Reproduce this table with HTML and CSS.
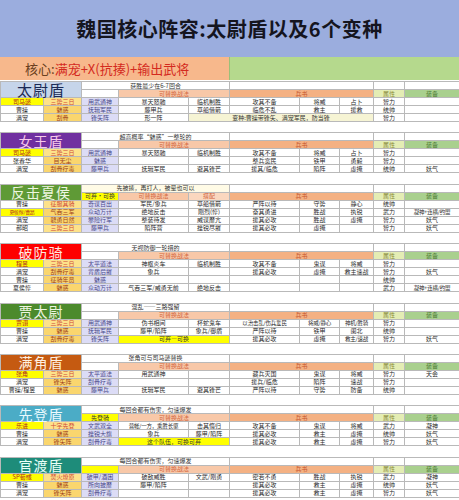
FILE: index.html
```html
<!DOCTYPE html>
<html lang="zh">
<head>
<meta charset="utf-8">
<title>魏国核心阵容</title>
<link rel="stylesheet" href="styles.css">
</head>
<body>
<div class="title">魏国核心阵容:太尉盾以及6个变种</div>
<div class="core"><div class="core-l"><span class="k">核心:</span><span class="r">满宠+X(抗揍)+输出武将</span></div><div class="core-r"></div></div>

<table class="sec">
<colgroup><col class="c1"><col class="c2"><col class="c3"><col class="c4"><col class="c5"><col class="c6"><col class="c7"><col class="c8"><col class="c9"><col class="c10"></colgroup>
<tr class="ra"><td class="name n1" rowspan="2" colspan="2">太尉盾</td><td colspan="3" class="sub">获胜最少在6-7回合</td><td colspan="3"></td><td></td><td></td></tr>
<tr class="rb"><td></td><td colspan="2" class="h-sk">可替换战法</td><td colspan="3" class="h-bs">兵书</td><td class="h-sx">属性</td><td class="h-zb">装备</td></tr>
<tr><td class="gy">司马懿</td><td class="sk1">三势三日</td><td class="lv">用武通神</td><td>暴天怒驰</td><td>临机制胜</td><td>攻其不备</td><td>将威</td><td>占卜</td><td>智力</td><td></td></tr>
<tr><td>曹操</td><td class="sk">魅惑</td><td class="lv">抚辑军民</td><td>藤甲兵</td><td>草船借箭</td><td>临危不乱</td><td>救主</td><td>援救</td><td>统帅</td><td></td></tr>
<tr><td>满宠</td><td class="sk">刮骨</td><td class="lv">锋矢阵</td><td>形一阵</td><td colspan="4" class="vt">变种:曹操带锋矢、满宠军民，防当锋</td><td>智力</td><td></td></tr>
</table>

<table class="sec">
<colgroup><col class="c1"><col class="c2"><col class="c3"><col class="c4"><col class="c5"><col class="c6"><col class="c7"><col class="c8"><col class="c9"><col class="c10"></colgroup>
<tr class="ra"><td class="name n2" rowspan="2" colspan="2">女王盾</td><td colspan="3" class="sub">超高概率“魅惑”一整轮的</td><td colspan="3"></td><td></td><td></td></tr>
<tr class="rb"><td></td><td colspan="2" class="h-sk">可替换战法</td><td colspan="3" class="h-bs">兵书</td><td class="h-sx">属性</td><td class="h-zb">装备</td></tr>
<tr><td class="gy">司马懿</td><td class="sk1">三势三日</td><td class="lv">用武通神</td><td>暴天怒驰</td><td>临机制胜</td><td>攻其不备</td><td>将威</td><td>占卜</td><td>智力</td><td></td></tr>
<tr><td>张春华</td><td class="sk">目无尘</td><td class="lv">魅惑</td><td></td><td></td><td>整兵宽民</td><td>铁甲</td><td>勇毅</td><td>智力</td><td></td></tr>
<tr><td>满宠</td><td class="sk">刮骨疗毒</td><td class="lv">藤甲兵</td><td>抚辑军民</td><td>避其锋芒</td><td>援其/临危</td><td>陷阵</td><td>虚掩</td><td>统帅</td><td>妖气</td></tr>
</table>

<table class="sec">
<colgroup><col class="c1"><col class="c2"><col class="c3"><col class="c4"><col class="c5"><col class="c6"><col class="c7"><col class="c8"><col class="c9"><col class="c10"></colgroup>
<tr class="ra"><td class="name n3" rowspan="2" colspan="2">反击夏侯</td><td colspan="3" class="sub cream">先被揍，再打人，被晕也可以</td><td colspan="3"></td><td></td><td></td></tr>
<tr class="rb"><td class="hy">可弃·可换</td><td class="h-sk">可替换战法</td><td class="h-sk2">搭配</td><td colspan="3" class="h-bs">兵书</td><td class="h-sx">属性</td><td class="h-zb">装备</td></tr>
<tr><td>曹操</td><td class="sk1">征服其骑</td><td class="lv">奇谋百出</td><td>军民/象兵</td><td>草船借箭</td><td>严阵以待</td><td>守势</td><td>静心</td><td>统帅</td><td></td></tr>
<tr><td class="gy xs">夏侯惇/曹昂</td><td class="sk">气吞三军</td><td class="lv">众动万计</td><td>绝地反击</td><td>刚烈(惇)</td><td>奋其勇进</td><td>胜战</td><td>执锐</td><td>武力</td><td class="sm">凝神+连横/约盟</td></tr>
<tr><td>满宠</td><td class="sk">骁勇日然</td><td class="lv">攀险行军</td><td>整装待发</td><td>威谋靡亢</td><td>援其必攻</td><td>胜战</td><td>虚掩</td><td>智力</td><td>妖气</td></tr>
<tr><td>郝昭</td><td class="sk1">三势三日</td><td class="lv">藤甲兵</td><td>陷阵营</td><td>挫锐尽摧</td><td>援其必攻</td><td>虚掩</td><td></td><td>智力</td><td>妖气</td></tr>
</table>

<table class="sec">
<colgroup><col class="c1"><col class="c2"><col class="c3"><col class="c4"><col class="c5"><col class="c6"><col class="c7"><col class="c8"><col class="c9"><col class="c10"></colgroup>
<tr class="ra"><td class="name n4" rowspan="2" colspan="2">破防骑</td><td colspan="3" class="sub">无视防御一轮措的</td><td colspan="3"></td><td></td><td></td></tr>
<tr class="rb"><td></td><td colspan="2" class="h-sk">可替换战法</td><td colspan="3" class="h-bs">兵书</td><td class="h-sx">属性</td><td class="h-zb">装备</td></tr>
<tr><td class="gy">程昱</td><td class="sk1">三势三日</td><td class="lv">太平道法</td><td>神枢炎车</td><td>临机制胜</td><td>攻其不备</td><td>鬼谋</td><td>将威</td><td>智力</td><td></td></tr>
<tr><td>满宠</td><td class="sk">刮骨疗毒</td><td class="lv">背盾后摧</td><td>象兵</td><td></td><td>援其必攻</td><td>虚掩</td><td>救主速战</td><td>智力</td><td>妖气</td></tr>
<tr><td>曹操</td><td class="sk">征骑年员</td><td class="lv">魅惑</td><td></td><td></td><td></td><td></td><td></td><td>统帅</td><td></td></tr>
<tr><td>夏侯惇</td><td class="sk">魅惑</td><td class="lv">众动万计</td><td>气吞三军/威勇无前</td><td>绝地反击</td><td></td><td></td><td></td><td>武力</td><td class="sm">凝神+连横/约盟</td></tr>
</table>

<table class="sec">
<colgroup><col class="c1"><col class="c2"><col class="c3"><col class="c4"><col class="c5"><col class="c6"><col class="c7"><col class="c8"><col class="c9"><col class="c10"></colgroup>
<tr class="ra"><td class="name n5" rowspan="2" colspan="2">贾太尉</td><td colspan="3" class="sub">混乱——三路强留</td><td colspan="3"></td><td></td><td></td></tr>
<tr class="rb"><td></td><td colspan="2" class="h-sk">可替换战法</td><td colspan="3" class="h-bs">兵书</td><td class="h-sx">属性</td><td class="h-zb">装备</td></tr>
<tr><td class="gy">贾诩</td><td class="sk1">三势三日</td><td class="lv">用武通神</td><td>伪书相间</td><td>杯蛇鬼车</td><td class="sm">以治击乱/伤兵爱民</td><td class="sm">将威/静心</td><td class="sm">神机/胜骑</td><td>智力</td><td></td></tr>
<tr><td>曹操</td><td class="sk">魅惑</td><td class="lv">抚辑军民</td><td>藤甲/陷阵</td><td>象兵/御盾</td><td>严阵以待</td><td>铁甲</td><td>阑北</td><td>统帅</td><td></td></tr>
<tr><td>满宠</td><td class="sk">刮骨疗毒</td><td class="lv">锋矢阵</td><td colspan="2" class="hy">可弃—可换</td><td>援其必攻</td><td>虚掩</td><td class="sm">救主/速战</td><td>智力</td><td>妖气</td></tr>
</table>

<table class="sec">
<colgroup><col class="c1"><col class="c2"><col class="c3"><col class="c4"><col class="c5"><col class="c6"><col class="c7"><col class="c8"><col class="c9"><col class="c10"></colgroup>
<tr class="ra"><td class="name n6" rowspan="2" colspan="2">满角盾</td><td colspan="3" class="sub">张角可与司马懿替换</td><td colspan="3"></td><td></td><td></td></tr>
<tr class="rb"><td></td><td colspan="2" class="h-sk">可替换战法</td><td colspan="3" class="h-bs">兵书</td><td class="h-sx">属性</td><td class="h-zb">装备</td></tr>
<tr><td class="gy">张角</td><td class="sk1">三势三日</td><td class="lv">太平道法</td><td>用武通神</td><td></td><td>藏兵灭国</td><td>鬼谋</td><td>将威</td><td>智力</td><td>天会</td></tr>
<tr><td>满宠</td><td class="sk">锋矢阵</td><td class="lv">刮骨疗毒</td><td></td><td></td><td>援兵/临危</td><td>陷阵</td><td>速战</td><td>智力</td><td></td></tr>
<tr><td>曹操/程昱</td><td class="sk">魅惑</td><td class="lv">藤甲兵</td><td>抚辑军民</td><td>避其锋芒</td><td>严阵以待</td><td>守势</td><td>防备</td><td>统帅</td><td></td></tr>
</table>

<table class="sec">
<colgroup><col class="c1"><col class="c2"><col class="c3"><col class="c4"><col class="c5"><col class="c6"><col class="c7"><col class="c8"><col class="c9"><col class="c10"></colgroup>
<tr class="ra"><td class="name n7" rowspan="2" colspan="2">先登盾</td><td colspan="3" class="sub">每回合都有伤害，匀速爆发</td><td colspan="3"></td><td></td><td></td></tr>
<tr class="rb"><td class="hy">先登骑</td><td colspan="2" class="h-sk">可替换战法</td><td colspan="3" class="h-bs">兵书</td><td class="h-sx">属性</td><td class="h-zb">装备</td></tr>
<tr><td class="gy">乐进</td><td class="sk1">十字先登</td><td class="lv">文武双全</td><td class="sm">营帐/一方，乘胜长驱</td><td>击其惰归</td><td>攻其不备</td><td>鬼谋</td><td>将威</td><td>武力</td><td>凝神</td></tr>
<tr><td>曹操</td><td class="sk">魅惑</td><td class="lv">挫锐大旗</td><td>象兵</td><td>藤甲/陷阵</td><td>援其必攻</td><td>救主</td><td>虚掩</td><td>统帅</td><td>妖气</td></tr>
<tr><td>满宠</td><td class="sk">锋矢阵</td><td class="lv">刮骨疗毒</td><td colspan="2" class="hy">这个队伍，可换可弃</td><td>援其必攻</td><td>救主</td><td>虚掩</td><td>智力</td><td>妖气</td></tr>
</table>

<table class="sec">
<colgroup><col class="c1"><col class="c2"><col class="c3"><col class="c4"><col class="c5"><col class="c6"><col class="c7"><col class="c8"><col class="c9"><col class="c10"></colgroup>
<tr class="ra"><td class="name n8" rowspan="2" colspan="2">官渡盾</td><td colspan="3" class="sub">每回合都有伤害，匀速爆发</td><td colspan="3"></td><td></td><td></td></tr>
<tr class="rb"><td class="hy"></td><td colspan="2" class="h-sk">可替换战法</td><td colspan="3" class="h-bs">兵书</td><td class="h-sx">属性</td><td class="h-zb">装备</td></tr>
<tr><td class="gy">SP荀彧</td><td class="sk1">焚火燎原</td><td class="lv">破甲/酒困</td><td>破敌威胜</td><td>文武/刚勇</td><td>密若不勇</td><td>胜战</td><td>执锐</td><td>武力</td><td>凝神</td></tr>
<tr><td>曹操</td><td class="sk">魅惑</td><td class="lv">所向披靡</td><td>藤甲/陷阵</td><td></td><td>援其必攻</td><td>救主</td><td>虚掩</td><td>统帅</td><td>妖气</td></tr>
<tr><td>满宠</td><td class="sk">锋矢阵</td><td class="lv">刮骨疗毒</td><td></td><td></td><td>援其必攻</td><td>救主</td><td>虚掩</td><td>智力</td><td>妖气</td></tr>
</table>
</body>
</html>
```

FILE: styles.css
```css
html, body {
  margin: 0;
  padding: 0;
  background: #ffffff;
}
body {
  width: 459px;
  font-family: "Noto Sans CJK SC", "Noto Sans", sans-serif;
  color: #222;
  overflow: hidden;
}
.title {
  height: 57px;
  background: #9badde;
  display: flex;
  align-items: center;
  justify-content: center;
  font-size: 20px;
  font-weight: bold;
  color: #15151f;
  letter-spacing: 0.5px;
}
.core {
  display: flex;
  height: 23px;
  margin-bottom: 1px;
}
.core-l {
  width: 229px;
  background: #f7b88c;
  display: flex;
  align-items: center;
  padding-left: 25px;
  box-sizing: border-box;
  font-size: 13px;
}
.core-l .k { color: #6a4020; }
.core-l .r { color: #d42a1e; }
.core-r {
  flex: 1;
  background: #b5d98d;
  border-left: 1px solid #9bbf78;
}
.sec {
  width: 459px;
  table-layout: fixed;
  border-collapse: collapse;
  margin-bottom: 10.4px;
}
.c1 { width: 43px; }
.c2 { width: 38px; }
.c3 { width: 37px; }
.c4 { width: 70px; }
.c5 { width: 41px; }
.c6 { width: 70px; }
.c7 { width: 40px; }
.c8 { width: 34px; }
.c9 { width: 31px; }
.c10 { width: 55px; }
.sec tr { height: 8px; }
.sec td {
  border: 1px solid #b9b9b9;
  padding: 0;
  font-size: 6px;
  line-height: 6px;
  text-align: center;
  white-space: nowrap;
  overflow: hidden;
  color: #2a2a2a;
  background: #ffffff;
}
.sec td.sm {
  font-size: 5.5px;
  letter-spacing: -0.2px;
}
.sec td.xs {
  font-size: 5px;
  letter-spacing: -0.3px;
}
.sec td.name {
  font-size: 14px;
  line-height: 14px;
  color: #ffffff;
  letter-spacing: 1px;
  overflow: visible;
}
.n1 { background: #c6d5ea !important; color: #1b2a55 !important; font-size: 15px !important; }
.n2 { background: #7030a0 !important; color: #f6c8ea !important; }
.n3 { background: #5f9a36 !important; color: #eef6e0 !important; }
.n4 { background: #fe0000 !important; color: #ffe9e0 !important; }
.n5 { background: #4c8a2c !important; color: #eef6e0 !important; }
.n6 { background: #c55a11 !important; color: #fff0e0 !important; }
.n7 { background: #4bacc6 !important; color: #eafaff !important; }
.n8 { background: #1e8c7a !important; color: #e8fff8 !important; }
.sec td.sub { color: #333; }
.sec td.cream { background: #fffbe6; }
.sec td.h-sk { background: #f8c8a8; color: #d2643c; }
.sec td.h-sk2 { background: #fad7bf; color: #d2643c; }
.sec td.h-bs { background: #f4b183; color: #c4532a; }
.sec td.h-sx { background: #e4edb4; color: #8a8a3a; }
.sec td.h-zb { background: #a9d08e; color: #4e7c36; }
.sec td.hy { background: #ffff00; color: #333; }
.sec td.gy { background: #ffff00; color: #b02a20; }
.sec td.sk { background: #fad66e; color: #a0421c; }
.sec td.sk1 { background: #fde28a; color: #d04a3a; }
.sec td.lv { background: #dcdcf6; color: #4a4a8a; }
.sec td.vt { background: #f6f4d4; color: #333; }
```
